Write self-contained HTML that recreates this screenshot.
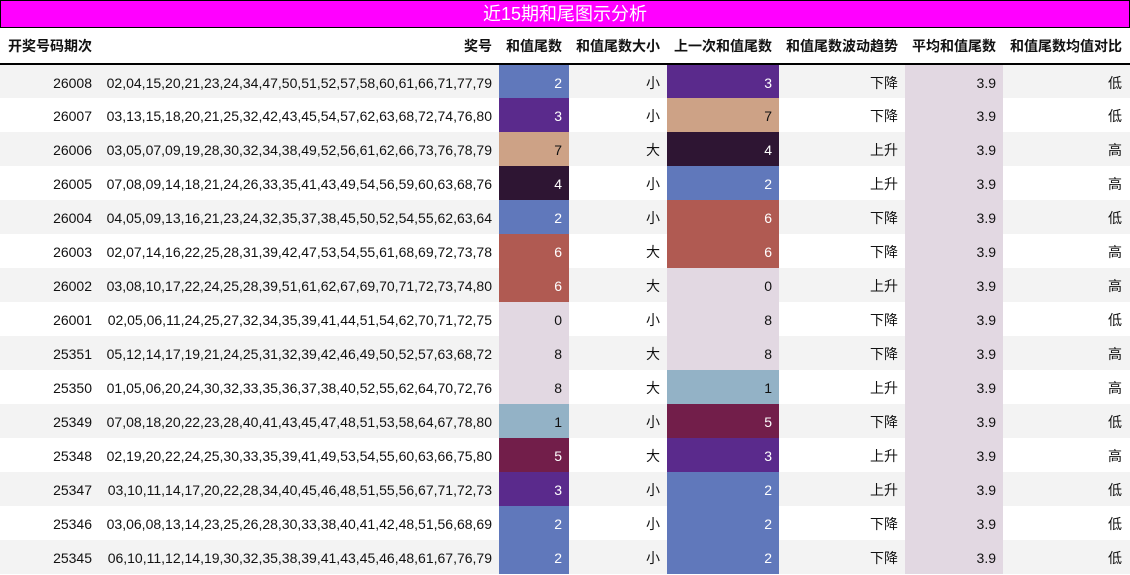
<!DOCTYPE html>
<html><head><meta charset="utf-8"><style>
*{margin:0;padding:0;box-sizing:border-box}
body{width:1130px;height:575px;overflow:hidden;background:#fff;font-family:"Liberation Sans","Noto Sans CJK SC",sans-serif;font-size:14px;color:#111}
.title{position:absolute;left:0;top:0;width:1130px;height:28px;background:#ff00ff;border:1px solid #000;color:#fff;font-size:18px;text-align:center;line-height:27px}
table{position:absolute;left:0;top:28px;border-collapse:collapse;table-layout:fixed;width:1130px}
th{height:36px;font-weight:bold;text-align:right;padding-right:7px;border-bottom:2px solid #000;font-size:14px}
th.l{text-align:left;padding-left:8px}
td{height:34px;text-align:right;padding-right:7px;padding-top:2px;white-space:nowrap}
td.p{padding-right:8px}
tr.o td{background:#f3f3f3}
td.avg{background:#e2d8e2 !important}
.c0,.c8{background:#e2d8e2 !important}
.c1{background:#93b2c6 !important}
.c2{background:#6078bb !important;color:#fff}
.c3{background:#5a2a8c !important;color:#fff}
.c4{background:#2e1533 !important;color:#fff}
.c5{background:#721e4a !important;color:#fff}
.c6{background:#b05a52 !important;color:#fff}
.c7{background:#cda286 !important}
</style></head><body>
<div class="title">近15期和尾图示分析</div>
<table>
<colgroup><col style="width:100px"><col style="width:399px"><col style="width:70px"><col style="width:98px"><col style="width:112px"><col style="width:126px"><col style="width:98px"><col style="width:127px"></colgroup>
<tr><th class="l">开奖号码期次</th><th>奖号</th><th>和值尾数</th><th>和值尾数大小</th><th>上一次和值尾数</th><th>和值尾数波动趋势</th><th>平均和值尾数</th><th style="padding-right:8px">和值尾数均值对比</th></tr>
<tr class="o"><td class="p">26008</td><td>02,04,15,20,21,23,24,34,47,50,51,52,57,58,60,61,66,71,77,79</td><td class="c2">2</td><td>小</td><td class="c3">3</td><td>下降</td><td class="avg">3.9</td><td class="p">低</td></tr>
<tr><td class="p">26007</td><td>03,13,15,18,20,21,25,32,42,43,45,54,57,62,63,68,72,74,76,80</td><td class="c3">3</td><td>小</td><td class="c7">7</td><td>下降</td><td class="avg">3.9</td><td class="p">低</td></tr>
<tr class="o"><td class="p">26006</td><td>03,05,07,09,19,28,30,32,34,38,49,52,56,61,62,66,73,76,78,79</td><td class="c7">7</td><td>大</td><td class="c4">4</td><td>上升</td><td class="avg">3.9</td><td class="p">高</td></tr>
<tr><td class="p">26005</td><td>07,08,09,14,18,21,24,26,33,35,41,43,49,54,56,59,60,63,68,76</td><td class="c4">4</td><td>小</td><td class="c2">2</td><td>上升</td><td class="avg">3.9</td><td class="p">高</td></tr>
<tr class="o"><td class="p">26004</td><td>04,05,09,13,16,21,23,24,32,35,37,38,45,50,52,54,55,62,63,64</td><td class="c2">2</td><td>小</td><td class="c6">6</td><td>下降</td><td class="avg">3.9</td><td class="p">低</td></tr>
<tr><td class="p">26003</td><td>02,07,14,16,22,25,28,31,39,42,47,53,54,55,61,68,69,72,73,78</td><td class="c6">6</td><td>大</td><td class="c6">6</td><td>下降</td><td class="avg">3.9</td><td class="p">高</td></tr>
<tr class="o"><td class="p">26002</td><td>03,08,10,17,22,24,25,28,39,51,61,62,67,69,70,71,72,73,74,80</td><td class="c6">6</td><td>大</td><td class="c0">0</td><td>上升</td><td class="avg">3.9</td><td class="p">高</td></tr>
<tr><td class="p">26001</td><td>02,05,06,11,24,25,27,32,34,35,39,41,44,51,54,62,70,71,72,75</td><td class="c0">0</td><td>小</td><td class="c8">8</td><td>下降</td><td class="avg">3.9</td><td class="p">低</td></tr>
<tr class="o"><td class="p">25351</td><td>05,12,14,17,19,21,24,25,31,32,39,42,46,49,50,52,57,63,68,72</td><td class="c8">8</td><td>大</td><td class="c8">8</td><td>下降</td><td class="avg">3.9</td><td class="p">高</td></tr>
<tr><td class="p">25350</td><td>01,05,06,20,24,30,32,33,35,36,37,38,40,52,55,62,64,70,72,76</td><td class="c8">8</td><td>大</td><td class="c1">1</td><td>上升</td><td class="avg">3.9</td><td class="p">高</td></tr>
<tr class="o"><td class="p">25349</td><td>07,08,18,20,22,23,28,40,41,43,45,47,48,51,53,58,64,67,78,80</td><td class="c1">1</td><td>小</td><td class="c5">5</td><td>下降</td><td class="avg">3.9</td><td class="p">低</td></tr>
<tr><td class="p">25348</td><td>02,19,20,22,24,25,30,33,35,39,41,49,53,54,55,60,63,66,75,80</td><td class="c5">5</td><td>大</td><td class="c3">3</td><td>上升</td><td class="avg">3.9</td><td class="p">高</td></tr>
<tr class="o"><td class="p">25347</td><td>03,10,11,14,17,20,22,28,34,40,45,46,48,51,55,56,67,71,72,73</td><td class="c3">3</td><td>小</td><td class="c2">2</td><td>上升</td><td class="avg">3.9</td><td class="p">低</td></tr>
<tr><td class="p">25346</td><td>03,06,08,13,14,23,25,26,28,30,33,38,40,41,42,48,51,56,68,69</td><td class="c2">2</td><td>小</td><td class="c2">2</td><td>下降</td><td class="avg">3.9</td><td class="p">低</td></tr>
<tr class="o"><td class="p">25345</td><td>06,10,11,12,14,19,30,32,35,38,39,41,43,45,46,48,61,67,76,79</td><td class="c2">2</td><td>小</td><td class="c2">2</td><td>下降</td><td class="avg">3.9</td><td class="p">低</td></tr>
</table>
</body></html>
